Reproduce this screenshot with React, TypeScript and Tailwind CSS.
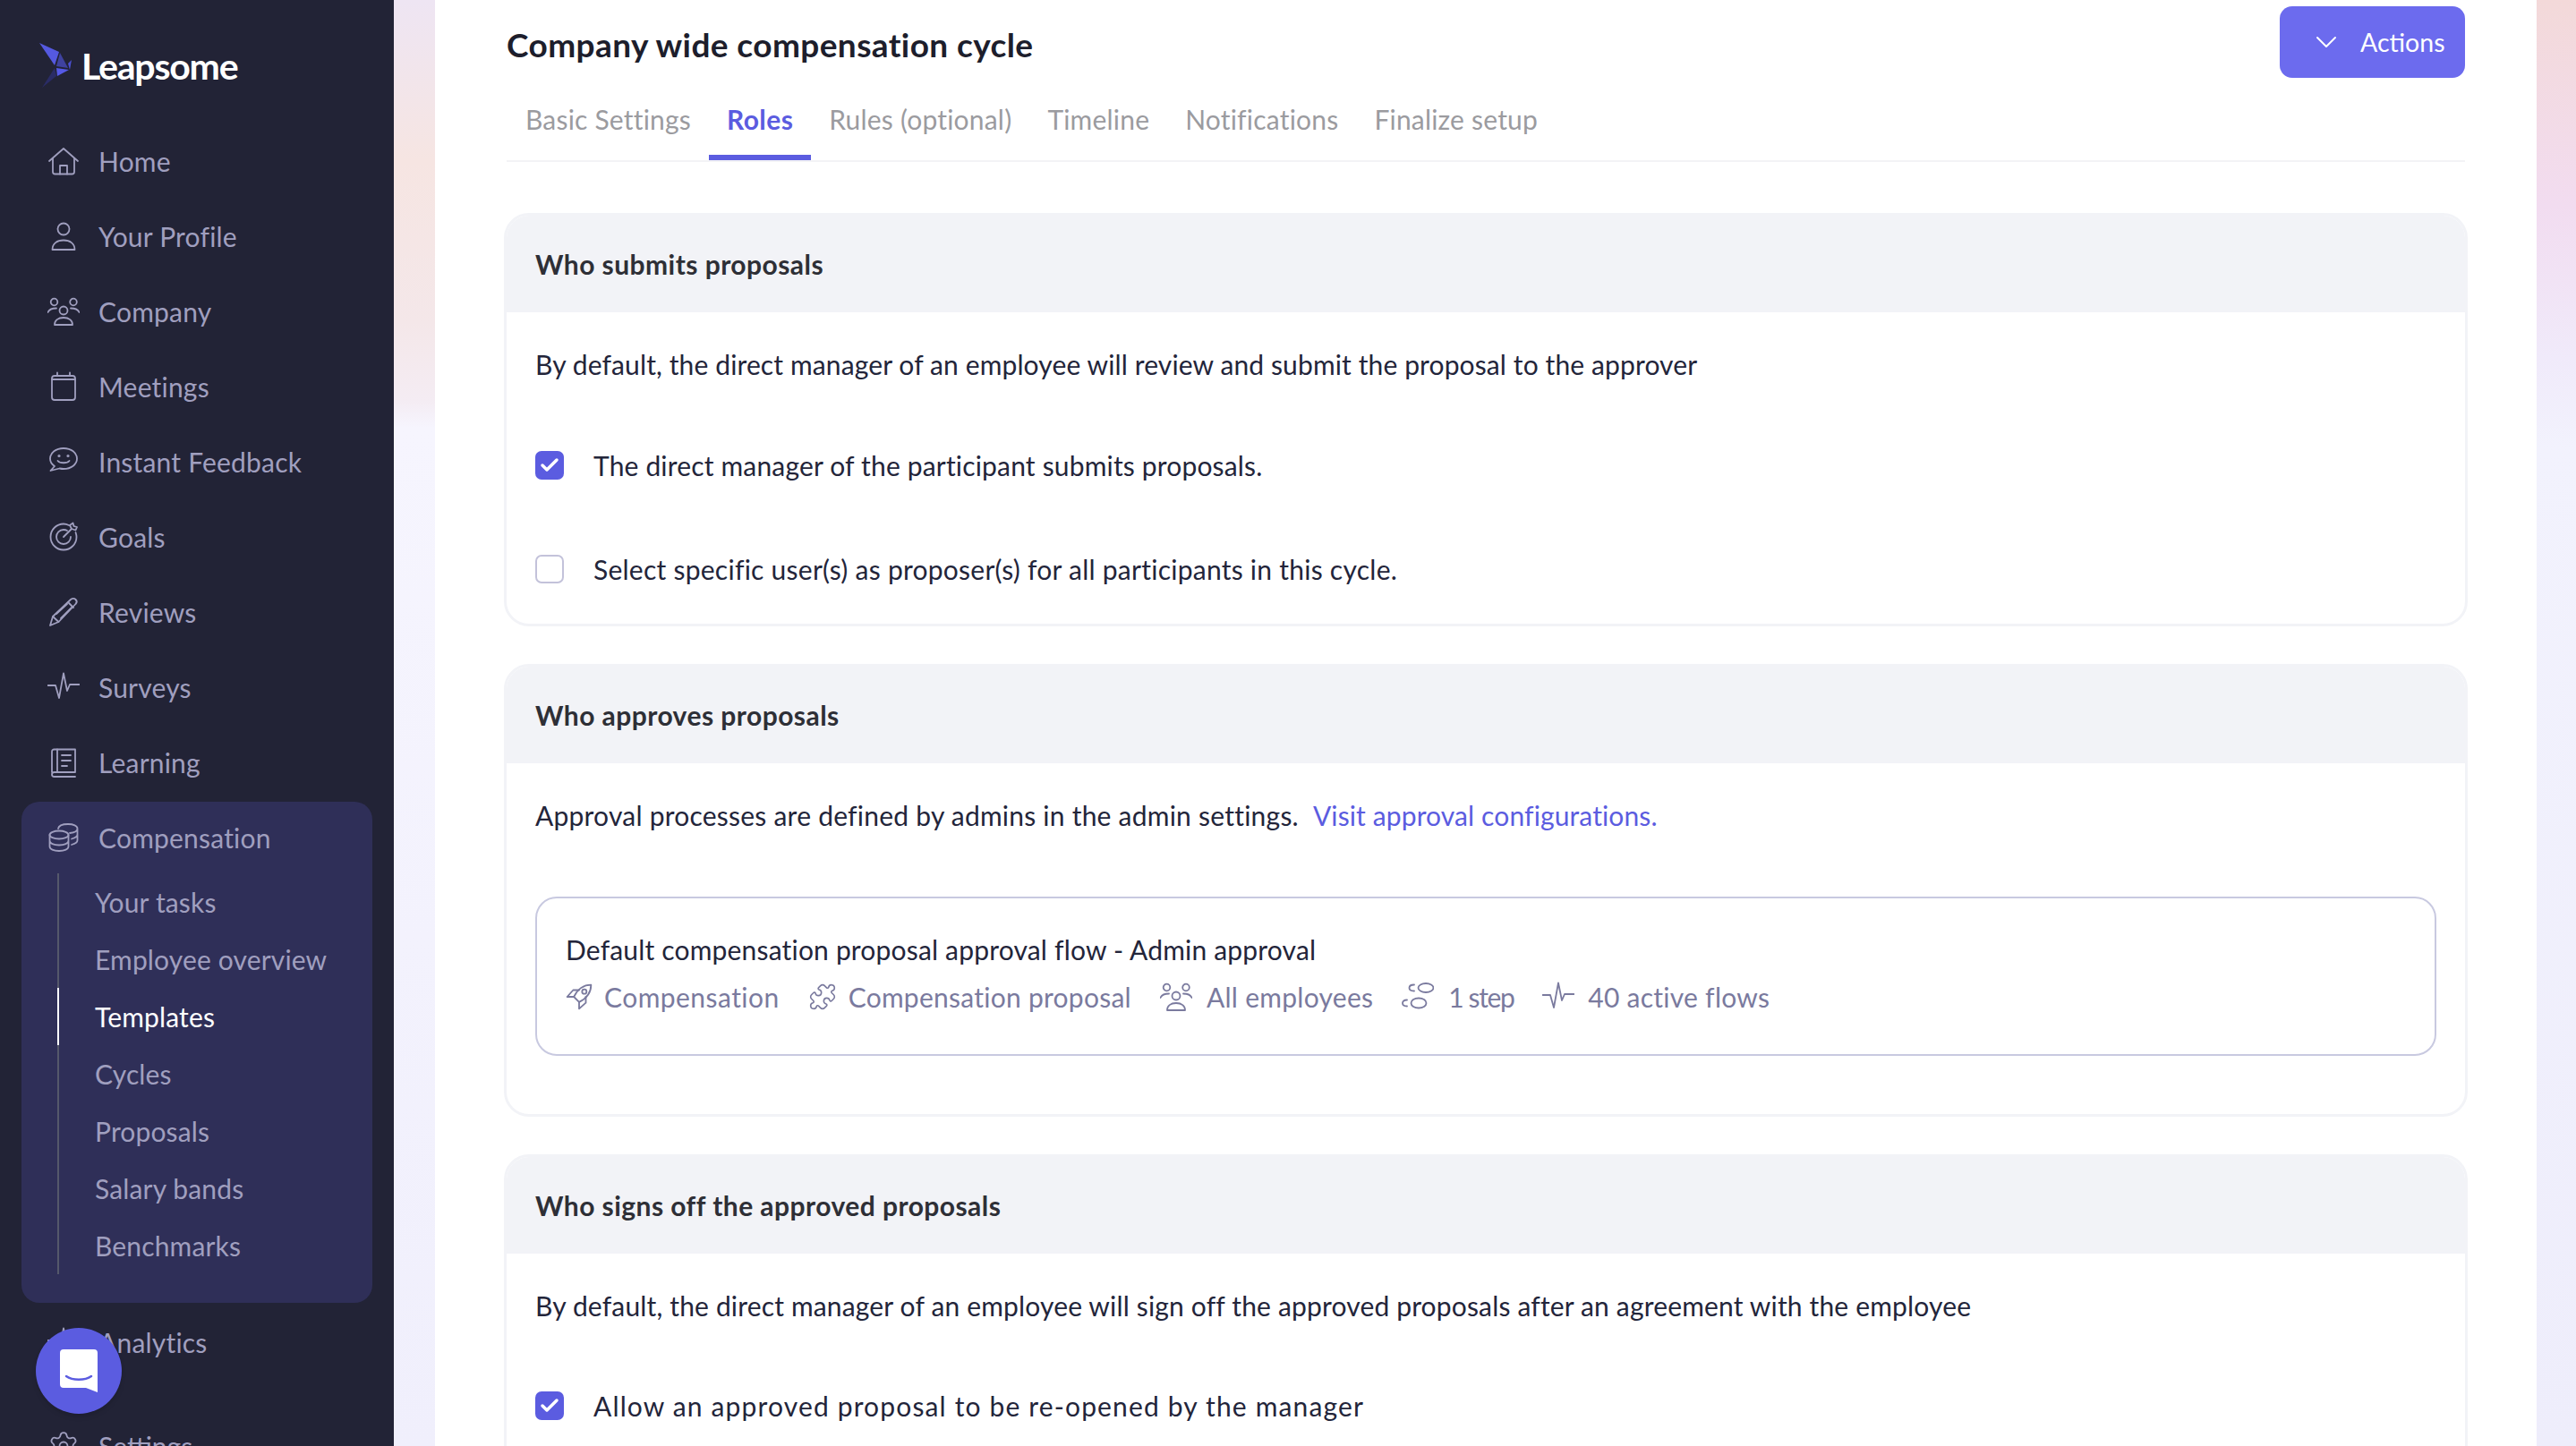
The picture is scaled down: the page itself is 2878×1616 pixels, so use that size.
import { Check, ChevronDown, Puzzle, Settings } from "lucide-react";
import type { ReactNode } from "react";

function Ico({ children, className = "w-[36px] h-[36px]" }: { children: ReactNode; className?: string }) {
  return (
    <svg viewBox="0 0 36 36" fill="none" stroke="currentColor" strokeWidth="1.8" strokeLinecap="round" strokeLinejoin="round" className={`${className} shrink-0`}>
      {children}
    </svg>
  );
}

const homeIcon = (
  <>
    <path d="M2 18 L18 4 L34 18" />
    <path d="M6 15 V30 a2.5 2.5 0 0 0 2.5 2.5 H27.500 a2.500 2.500 0 0 0 2.500 -2.500 V15" />
    <path d="M14 32.500 V23 H22 V32.500" />
  </>
);
const profileIcon = (
  <>
    <circle cx="18" cy="10" r="6.500" />
    <path d="M5.500 33 C5.500 26 11 22.500 18 22.500 S30.500 26 30.500 33 Z" />
  </>
);
const companyIcon = (
  <>
    <circle cx="18" cy="17" r="4.500" />
    <circle cx="7.500" cy="7.500" r="3.800" />
    <circle cx="29" cy="7.500" r="3.800" />
    <path d="M8 33 C8 28 12 25 18 25 S28 28 28 33 Z" />
    <path d="M0.500 19 C2 15.500 5 14.500 10 14.500" />
    <path d="M35.500 19 C34 15.500 31 14.500 26 14.500" />
  </>
);
const calendarIcon = (
  <>
    <rect x="5" y="6" width="26" height="27" rx="3" />
    <path d="M5 10 H31" />
    <path d="M11 2.500 V6 M25 2.500 V6" />
  </>
);
const chatIcon = (
  <>
    <path d="M18 3 C9.500 3 3 8 3 14.500 C3 18 5 21 8 23 L3.500 28 L13.500 25.500 C15 25.800 16.500 26 18 26 C26.500 26 33 21 33 14.500 C33 8 26.500 3 18 3 Z" />
    <path d="M11.500 17 C14 20 22 20 24.500 17" />
    <circle cx="13" cy="11.500" r="0.700" />
    <circle cx="23" cy="11.500" r="0.700" />
  </>
);
const goalsIcon = (
  <>
    <path d="M24 5 C21 3.500 19.500 3.500 18 3.500 C10 3.500 3.500 10 3.500 18 C3.500 26 10 32.500 18 32.500 C26 32.500 32.500 26 32.500 18 C32.500 16 32 14.500 31.500 13" />
    <path d="M22 11 C20.500 10 19.500 10 18 10 C13.500 10 10 13.500 10 18 C10 22.500 13.500 26 18 26 C22.500 26 26 22.500 26 18" />
    <path d="M18 18 L27 9 M25 5 L27 9 L31.500 10.500 L33 7 L29.500 6 L28.500 2.500 Z" />
  </>
);
const reviewsIcon = (
  <>
    <path d="M3 33 L6 23 L26 4 C28 2.500 30 2.500 31.500 4 C33 5.500 33 7.500 31.500 9 L12.500 29 Z" />
    <path d="M6 23 L12.500 29 M23 7 L29 13 M10 20 L22 9 M15 25 L27 13" />
  </>
);
const pulseIcon = (
  <path d="M0.500 16 H9 L13 30 L18 2.500 L22 22 L25 15 H35.500" />
);
const learningIcon = (
  <>
    <path d="M5 29 V6 a2.500 2.500 0 0 1 2.500 -2.500 H31 V29 H7.500 a2.500 2.500 0 0 0 0 5 H31" />
    <path d="M11 3.500 V29 M16 10 H26 M16 16 H26 M16 22 H22" />
  </>
);
const coinsIcon = (
  <>
    <ellipse cx="13" cy="15" rx="10.500" ry="4.500" />
    <path d="M2.500 15 V28 C2.500 31 7 33 13 33 S23.500 31 23.500 28 V15 M2.500 21.500 C2.500 24.500 7 26.500 13 26.500 S23.500 24.500 23.500 21.500" />
    <path d="M12 8 C12.500 5 17 3 23 3 C29 3 33.500 5 33.500 8 V21 C33.500 23 31 25 27 26 M33.500 14.500 C33.500 16.500 31 18.500 27 19.500 M33.500 8 C33.500 10.500 30 12.500 25 13" />
  </>
);
// footprints, as in the step count of a flow
const stepIcon = (
  <>
    <ellipse cx="27" cy="8" rx="8.500" ry="5" />
    <path d="M14 4.500 C10 4.500 8.500 6 8.500 8 C8.500 10 10 11.500 14 11.500" />
    <ellipse cx="19" cy="25" rx="8.500" ry="5.500" />
    <path d="M6 21.500 C2.500 21.500 1 23 1 25 C1 27 2.500 28.500 6 28.500" />
  </>
);
const rocketIcon = (
  <g strokeWidth="2.200">
    <path d="M34 2 C24 2 16 8 11 18 L18 25 C28 20 34 12 34 2 Z" />
    <path d="M11 18 H2 L10 9 H18" />
    <path d="M18 25 V34 L27 26 V18" />
    <circle cx="25" cy="11" r="3" />
  </g>
);

const nav = [
  { label: "Home", icon: homeIcon },
  { label: "Your Profile", icon: profileIcon },
  { label: "Company", icon: companyIcon },
  { label: "Meetings", icon: calendarIcon },
  { label: "Instant Feedback", icon: chatIcon },
  { label: "Goals", icon: goalsIcon },
  { label: "Reviews", icon: reviewsIcon },
  { label: "Surveys", icon: pulseIcon },
  { label: "Learning", icon: learningIcon },
];

const subNav = ["Your tasks", "Employee overview", "Templates", "Cycles", "Proposals", "Salary bands", "Benchmarks"];
const tabs = ["Basic Settings", "Roles", "Rules (optional)", "Timeline", "Notifications", "Finalize setup"];

function Logo() {
  return (
    <div className="h-[138px] flex items-start">
      <svg viewBox="0 0 40 52" className="w-[40px] h-[52px] ml-[43px] mt-[47px] shrink-0">
        <polygon points="1,1 23,11 18,26" fill="#5559e0" />
        <polygon points="24,12 33,29 20,27" fill="#3f429f" />
        <polygon points="33,24 37,20 35,31" fill="#4a4fd0" />
        <polygon points="20,29 34,31 21,38" fill="#5559e6" />
        <polygon points="4,51 18,29 20,38" fill="#2a2c66" />
      </svg>
      <span className="ml-[8px] mt-[50px] text-[41px] leading-[48px] font-bold tracking-[-1.2px] text-white">Leapsome</span>
    </div>
  );
}

function NavRow({ label, icon }: { label: string; icon: ReactNode }) {
  return (
    <div className="h-[84px] flex items-center pl-[53px] gap-[21px] text-[#a09fbf]">
      <Ico>{icon}</Ico>
      <span className="text-[30px] tracking-[0.2px]">{label}</span>
    </div>
  );
}

function Sidebar() {
  return (
    <aside className="w-[440px] h-full bg-[#222336] overflow-hidden shrink-0">
      <Logo />
      {nav.map((n) => (
        <NavRow key={n.label} label={n.label} icon={n.icon} />
      ))}
      <div className="mx-[24px] w-[392px] h-[560px] bg-[#2f2f58] rounded-[20px] mt-[2px] text-[#a09fbf]">
        <div className="h-[80px] flex items-center pl-[29px] gap-[21px]">
          <Ico>{coinsIcon}</Ico>
          <span className="text-[30px] tracking-[0.2px]">Compensation</span>
        </div>
        <div className="ml-[40px] border-l-2 border-[#55586b]">
          {subNav.map((s) => (
            <div
              key={s}
              className={`h-[64px] flex items-center pl-[40px] text-[30px] tracking-[0.15px] ${s === "Templates" ? "text-white border-l-2 border-white -ml-[2px]" : ""}`}
            >
              {s}
            </div>
          ))}
        </div>
      </div>
      <div className="mt-[2px]">
        <NavRow label="Analytics" icon={pulseIcon} />
      </div>
      <div className="mt-[32px] h-[84px] flex items-center pl-[53px] gap-[21px] text-[#a09fbf]">
        <Settings className="w-[36px] h-[36px]" strokeWidth={1.2} />
        <span className="text-[30px]">Settings</span>
      </div>
    </aside>
  );
}

function Box({ checked }: { checked: boolean }) {
  return checked ? (
    <span className="w-[32px] h-[32px] rounded-[7px] bg-[#5b5ce0] flex items-center justify-center shrink-0">
      <Check className="w-[24px] h-[24px] text-white" strokeWidth={3.5} />
    </span>
  ) : (
    <span className="w-[32px] h-[32px] rounded-[7px] border-2 border-[#c3c2da] bg-white shrink-0" />
  );
}

function CheckRow({ checked, label, className }: { checked: boolean; label: string; className: string }) {
  return (
    <div className={`flex items-center h-[36px] gap-[33px] text-[#23253a] ${className}`}>
      <Box checked={checked} />
      <span className="text-[30px] leading-[36px]">{label}</span>
    </div>
  );
}

function Card({ title, children, className = "" }: { title: string; children: ReactNode; className?: string }) {
  return (
    <section className={`-mx-[3px] rounded-[28px] border-[3px] border-[#f2f3f7] overflow-hidden bg-white ${className}`}>
      <div className="h-[108px] bg-[#f2f3f7] flex items-center px-[32px]">
        <h2 className="text-[30px] font-bold tracking-[0.45px] text-[#2e2f36]">{title}</h2>
      </div>
      <div className="px-[32px]">{children}</div>
    </section>
  );
}

function Meta({ icon, label, className = "" }: { icon: ReactNode; label: string; className?: string }) {
  return (
    <div className={`flex items-center ${className}`}>
      {icon}
      <span className="text-[30px] leading-[36px]">{label}</span>
    </div>
  );
}

function BodyLine({ children, className = "" }: { children: ReactNode; className?: string }) {
  return <p className={`mt-[40px] text-[30px] leading-[36px] text-[#23253a] ${className}`}>{children}</p>;
}

export default function App() {
  return (
    <div className="relative flex w-[2878px] h-[1616px] overflow-hidden font-['Lato',sans-serif] bg-white">
      <Sidebar />
      <div className="w-[46px] h-full shrink-0 bg-[linear-gradient(180deg,#eee5f3_0px,#f6e5e2_180px,#f4e7e9_360px,#f4ecf3_448px,#f6f5fe_478px,#f0effc_1616px)]" />
      <main className="w-[2348px] h-full shrink-0 bg-white px-[80px] pt-[7px]">
        <div className="flex justify-between items-start h-[80px]">
          <h1 className="mt-[21px] text-[37px] leading-[44px] font-bold tracking-[0.4px] text-[#1d1e2c]">Company wide compensation cycle</h1>
          <button className="w-[207px] h-[80px] rounded-[14px] bg-[#6c6bee] text-white flex items-center pl-[32px] gap-[18px]">
            <ChevronDown className="w-[40px] h-[40px]" strokeWidth={1.2} />
            <span className="text-[28.5px]">Actions</span>
          </button>
        </div>
        <nav className="flex border-b-2 border-[#f3f3f6] h-[94px] pl-[1px]">
          {tabs.map((t) => (
            <div
              key={t}
              className={`h-[92px] px-[20px] pt-[7px] flex items-center text-[30px] border-b-[6px] ${t === "Roles" ? "border-[#5b5ce0] text-[#5b5ce0] font-bold tracking-[0.4px]" : "border-transparent text-[#9b9b9f] tracking-[0.2px]"}`}
            >
              {t}
            </div>
          ))}
        </nav>
        <div className="mt-[57px] flex flex-col gap-[42px]">
          <Card title="Who submits proposals" className="h-[462px]">
            <BodyLine className="tracking-[0.12px]">By default, the direct manager of an employee will review and submit the proposal to the approver</BodyLine>
            <CheckRow checked label="The direct manager of the participant submits proposals." className="mt-[77px] tracking-[0.17px]" />
            <CheckRow checked={false} label="Select specific user(s) as proposer(s) for all participants in this cycle." className="mt-[80px] tracking-[0.25px]" />
          </Card>
          <Card title="Who approves proposals" className="h-[506px]">
            <BodyLine>
              <span className="tracking-[0.23px]">Approval processes are defined by admins in the admin settings.</span>
              <span className="ml-[16px] tracking-[0.12px] text-[#5b5ce0]">Visit approval configurations.</span>
            </BodyLine>
            <div className="mt-[73px] h-[178px] rounded-[24px] border-2 border-[#c8c9e0] pl-[32px] pt-[39px]">
              <div className="text-[30px] leading-[36px] tracking-[0.18px] text-[#23253a]">Default compensation proposal approval flow - Admin approval</div>
              <div className="mt-[17px] flex items-center gap-[32px] text-[#7a7a9e]">
                <Meta icon={<Ico className="w-[30px] h-[30px]">{rocketIcon}</Ico>} label="Compensation" className="gap-[13px] tracking-[0.45px]" />
                <Meta icon={<Puzzle className="w-[32px] h-[32px] shrink-0" strokeWidth={1.2} />} label="Compensation proposal" className="gap-[13px] tracking-[0.26px]" />
                <Meta icon={<Ico>{companyIcon}</Ico>} label="All employees" className="gap-[16px] tracking-[0.28px]" />
                <Meta icon={<Ico>{stepIcon}</Ico>} label="1 step" className="gap-[16px] -tracking-[1.4px]" />
                <Meta icon={<Ico>{pulseIcon}</Ico>} label="40 active flows" className="gap-[15px] tracking-[0.25px]" />
              </div>
            </div>
          </Card>
          <Card title="Who signs off the approved proposals">
            <BodyLine className="tracking-[0.16px]">By default, the direct manager of an employee will sign off the approved proposals after an agreement with the employee</BodyLine>
            <CheckRow checked label="Allow an approved proposal to be re-opened by the manager" className="mt-[76px] tracking-[1.15px]" />
            <div className="h-[200px]" />
          </Card>
        </div>
      </main>
      <div className="w-[44px] h-full shrink-0 bg-[linear-gradient(180deg,#f3d9d9_0px,#f2dcf0_230px,#f0eafa_400px,#f2f2fd_500px,#eeedfb_1616px)]" />
      <div className="absolute left-[40px] top-[1484px] w-[96px] h-[96px] rounded-full bg-[#5b5ce0] flex items-center justify-center shadow-md">
        <svg viewBox="0 0 42 48" className="w-[42px] h-[48px]">
          <path d="M4 0 H38 a4 4 0 0 1 4 4 V48 L29 43 H4 a4 4 0 0 1 -4 -4 V4 a4 4 0 0 1 4 -4 Z" fill="#fff" />
          <path d="M7 30 C14 35 28 35 35 30" fill="none" stroke="#5b5ce0" strokeWidth="2.500" strokeLinecap="round" />
        </svg>
      </div>
    </div>
  );
}
